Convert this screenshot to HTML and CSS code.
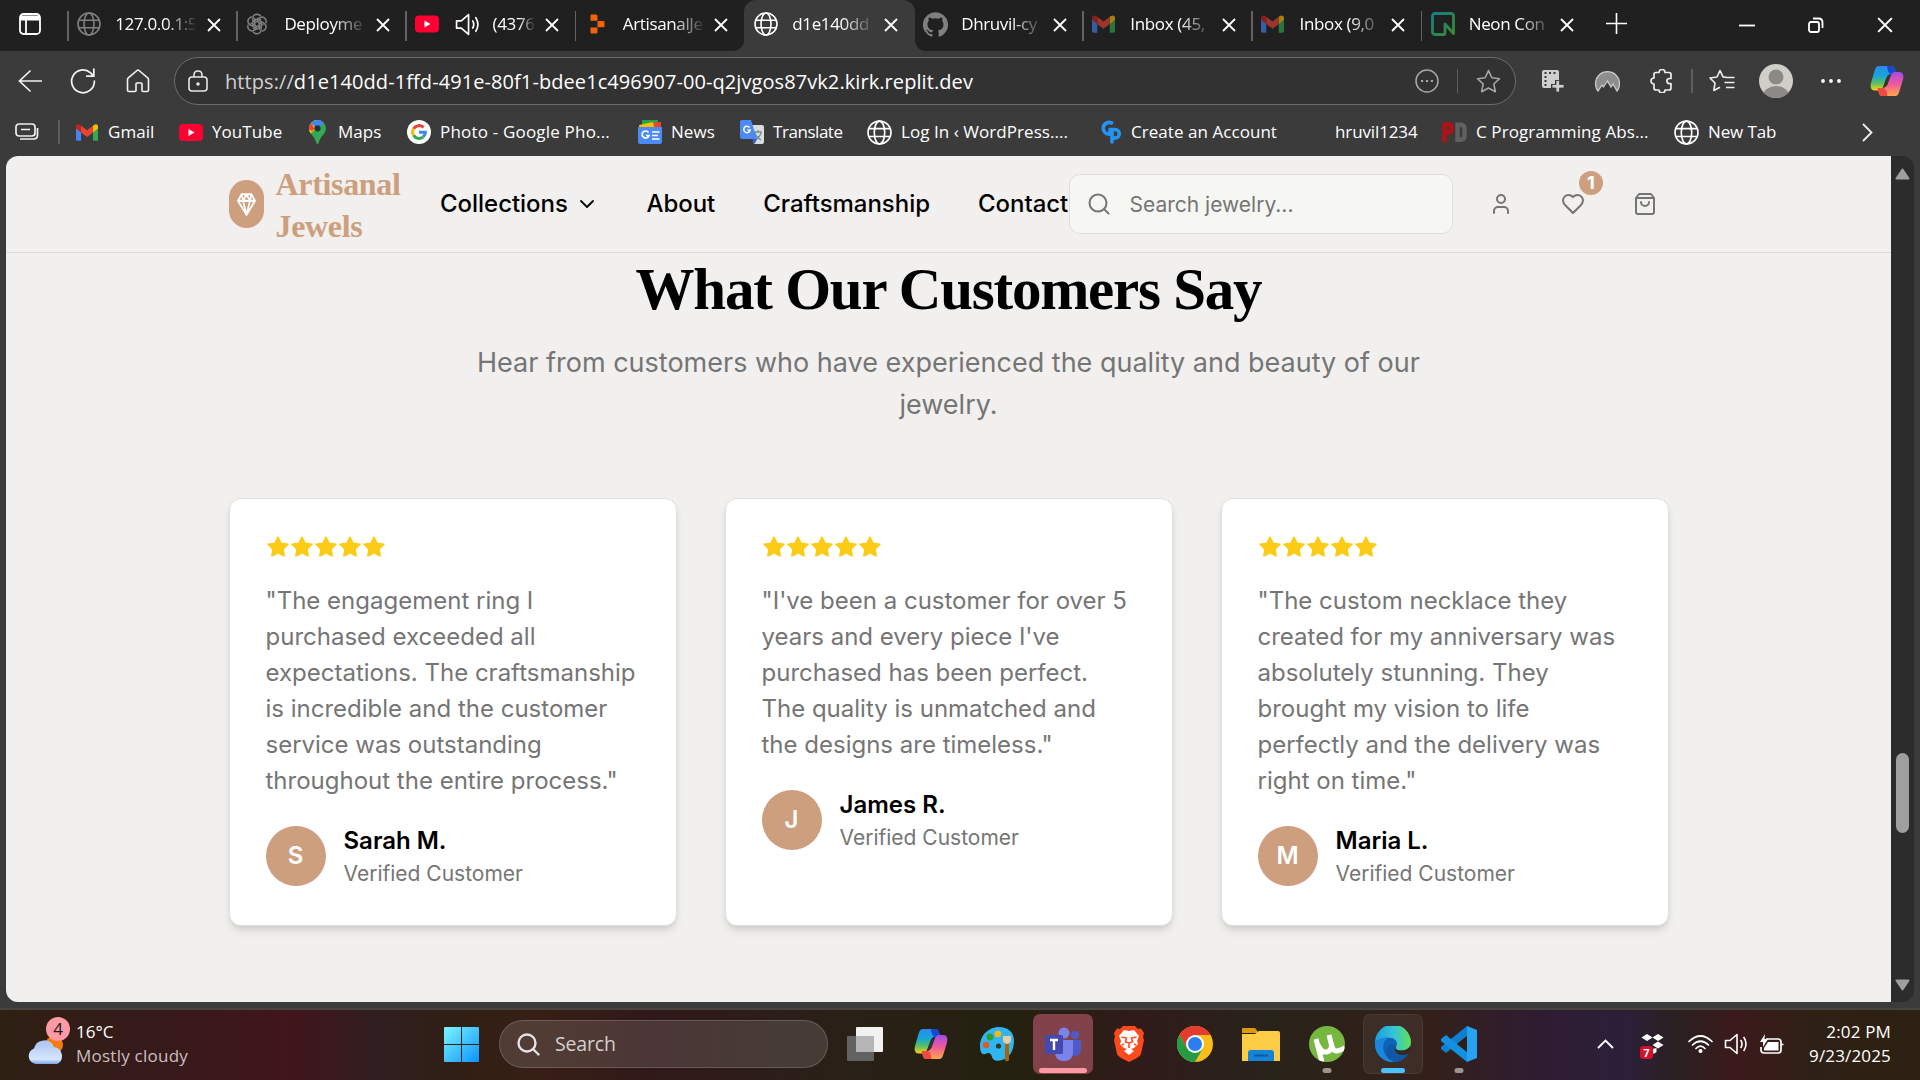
FILE: index.html
```html
<!DOCTYPE html>
<html lang="en">
<head>
<meta charset="utf-8">
<title>Artisanal Jewels</title>
<link rel="stylesheet" href="styles.css">
</head>
<body>
<svg class="sprite" aria-hidden="true">
  <symbol id="globe" viewBox="0 0 24 24"><g fill="none" stroke="currentColor" stroke-width="1.6"><circle cx="12" cy="12" r="11"/><ellipse cx="12" cy="12" rx="5" ry="11"/><path d="M2 8.2h20M2 15.8h20"/></g></symbol>
  <symbol id="close" viewBox="0 0 14 14"><path d="M1 1l12 12M13 1L1 13" stroke="currentColor" stroke-width="1.8" fill="none"/></symbol>
  <symbol id="gmail" viewBox="0 0 24 18"><path d="M0 2v14.500Q0 18 1.600 18H5.500V8z" fill="#4285f4"/><path d="M18.500 8v10h3.900Q24 18 24 16.500V2z" fill="#34a853"/><path d="M18.500 1.500V9L24 4.500V2.500C24 .2 21.500-.7 19.800.6z" fill="#fbbc04"/><path d="M5.500 9V1.500L12 6.500l6.500-5V9L12 14z" fill="#ea4335"/><path d="M0 2.500v2L5.500 9V1.500L4.200.6C2.500-.7 0 .2 0 2.500z" fill="#c5221f"/></symbol>
  <symbol id="youtube" viewBox="0 0 24 17"><rect width="24" height="17" rx="4" fill="#f03"/><path d="M9.500 5v7l6-3.500z" fill="#fff"/></symbol>
  <symbol id="copilot" viewBox="0 0 34 32"><path d="M9 1h12c3 0 4 2 4.500 5L27 9h-6c-3 0-4 2-5 5l-3 8c-1 3-3 3.500-5 3.500H5C1 25.500 0 22 1 18L4.500 6C5.500 2.500 6.500 1 9 1z" fill="url(#cpA)"/><path d="M17 1h4c3 0 4 2 4.500 5L27 9h-5.500C19 9 17.500 6 17 1z" fill="#1947d2"/><path d="M25 31H13c-3 0-4-2-4.500-5L7.500 23H12c3 0 5-2 6-5l3-8c1-2.500 3-3 5-3h3c4 0 5 3.500 4 7.500L29.500 26c-1 3.500-2 5-4.500 5z" fill="url(#cpB)"/><path d="M7.500 23H13c2.500 0 4 3 4.500 8H13c-3 0-4-2-4.500-5z" fill="#f3483f"/><path d="M16.300 13.500l4.700-4.500-4 11.500-3.500 1z" fill="#333"/></symbol>
  <linearGradient id="cpA" x2="0" y2="1"><stop stop-color="#2b8af0"/><stop offset=".4" stop-color="#17a6d8"/><stop offset=".7" stop-color="#5bc060"/><stop offset="1" stop-color="#ffd010"/></linearGradient>
  <linearGradient id="cpB" x2="0" y2="1"><stop stop-color="#a24be8"/><stop offset=".5" stop-color="#f0599a"/><stop offset="1" stop-color="#ffa84c"/></linearGradient>
  <symbol id="speaker" viewBox="0 0 24 24"><g fill="none" stroke="currentColor" stroke-width="1.6" stroke-linejoin="round" stroke-linecap="round"><path d="M1.500 8.500v7h4.500l7 6v-19l-7 6z"/><path d="M17 8.500q2 3.500 0 7M20 5.500q4 6.500 0 13"/></g></symbol>
  <symbol id="star-line" viewBox="0 0 24 24"><path d="M12 1.500l3.200 6.900 7.400.9-5.500 5.100 1.500 7.400L12 18.200l-6.600 3.600 1.500-7.400L1.400 9.300l7.400-.9z" fill="none" stroke="currentColor" stroke-width="1.500" stroke-linejoin="round"/></symbol>
  <symbol id="star" viewBox="0 0 24 24"><path d="M12 2l3.090 6.260L22 9.270l-5 4.870 1.180 6.880L12 17.770l-6.180 3.250L7 14.140 2 9.270l6.910-1.010z" fill="#facc15" stroke="#facc15" stroke-width="1.500" stroke-linejoin="round"/></symbol>
  <symbol id="rating" viewBox="0 0 120 24"><use href="#star" width="24" height="24"/><use href="#star" x="24" width="24" height="24"/><use href="#star" x="48" width="24" height="24"/><use href="#star" x="72" width="24" height="24"/><use href="#star" x="96" width="24" height="24"/></symbol>
</svg>

<header class="tabstrip">
  <div class="workspaces"><svg width="22" height="22" viewBox="0 0 22 22" fill="none" stroke="#fff" stroke-width="1.800"><rect x="1" y="1" width="20" height="20" rx="3.500"/><path d="M1 5h20" stroke-width="5"/><path d="M7 6v15"/></svg></div>
  <div class="tab first"><svg class="fav dim" width="24" height="24"><use href="#globe"/></svg><span class="title">127.0.0.1:5</span><svg class="x"><use href="#close"/></svg></div>
  <div class="tab"><svg class="fav dim" width="22" height="22" viewBox="0 0 24 24" fill="none" stroke="currentColor" stroke-width="1.600" stroke-linejoin="round"><g id="petal"><path d="M7.500 14.800V6.500Q7.500 1.500 12 1.300q2.500 0 4.200 2M16.500 6.500l-6.800 4"/></g><use href="#petal" transform="rotate(60 12 12)"/><use href="#petal" transform="rotate(120 12 12)"/><use href="#petal" transform="rotate(180 12 12)"/><use href="#petal" transform="rotate(240 12 12)"/><use href="#petal" transform="rotate(300 12 12)"/></svg><span class="title">Deployme</span><svg class="x"><use href="#close"/></svg></div>
  <div class="tab"><svg class="fav" width="24" height="20"><use href="#youtube"/></svg><svg class="sound" width="25" height="25"><use href="#speaker"/></svg><span class="title short">(4376</span><svg class="x"><use href="#close"/></svg></div>
  <div class="tab"><svg class="fav" width="24" height="20" viewBox="0 0 24 20" fill="#f26207"><path d="M5.500 1.500Q5.500.5 6.500.5H11q1.500 0 1.500 1.500v4.800h-7zM12.500 7h6q1 0 1 1v4.200q0 1-1 1h-6zM5.500 13.400h7v4.800q0 1.300-1.500 1.300H6.500q-1 0-1-1z"/></svg><span class="title">ArtisanalJe</span><svg class="x"><use href="#close"/></svg></div>
  <div class="tab active"><svg class="fav" width="24" height="24"><use href="#globe"/></svg><span class="title">d1e140dd</span><svg class="x"><use href="#close"/></svg></div>
  <div class="tab plain"><svg class="fav dim" width="25" height="25" viewBox="0 0 24 24" fill="currentColor"><path d="M12 .3a12 12 0 0 0-3.800 23.400c.6.1.8-.3.800-.6v-2c-3.300.7-4-1.600-4-1.600-.6-1.400-1.400-1.800-1.400-1.800-1-.7.1-.7.1-.7 1.200 0 1.900 1.200 1.900 1.200 1 1.800 2.800 1.300 3.500 1 0-.8.4-1.300.7-1.600-2.700-.3-5.500-1.300-5.500-6 0-1.200.5-2.300 1.300-3.100-.2-.4-.6-1.600 0-3.200 0 0 1-.3 3.400 1.200a11.500 11.500 0 0 1 6 0c2.300-1.500 3.300-1.200 3.300-1.200.6 1.600.2 2.800 0 3.200.9.800 1.300 1.900 1.300 3.200 0 4.600-2.800 5.600-5.500 5.900.5.400.9 1 .9 2.200v3.300c0 .3.100.7.800.6A12 12 0 0 0 12 .3"/></svg><span class="title">Dhruvil-cy</span><svg class="x"><use href="#close"/></svg></div>
  <div class="tab"><svg class="fav faded" width="23" height="18"><use href="#gmail"/></svg><span class="title">Inbox (45,</span><svg class="x"><use href="#close"/></svg></div>
  <div class="tab"><svg class="fav faded" width="23" height="18"><use href="#gmail"/></svg><span class="title">Inbox (9,0</span><svg class="x"><use href="#close"/></svg></div>
  <div class="tab"><svg class="fav" width="24" height="24" viewBox="0 0 24 24" fill="none" stroke="url(#neon)" stroke-width="2.800" stroke-linejoin="round"><defs><linearGradient id="neon" x2="1" y2="1"><stop stop-color="#157f86"/><stop offset="1" stop-color="#3b8a32"/></linearGradient></defs><path d="M13 22.500H4q-2.500 0-2.500-2.500V4Q1.500 1.500 4 1.500h16q2.500 0 2.500 2.500v17.500L14 12v8.500q0 2-1 2z"/></svg><span class="title">Neon Con</span><svg class="x"><use href="#close"/></svg></div>
  <div class="newtab"><svg width="21" height="21" viewBox="0 0 21 21"><path d="M10.500 0v21M0 10.500h21" stroke="#fff" stroke-width="1.600"/></svg></div>
  <div class="winctl">
    <svg width="16" height="16" viewBox="0 0 16 16"><path d="M0 8.500h16" stroke="#fff" stroke-width="1.800"/></svg>
    <svg width="16" height="16" viewBox="0 0 16 16" fill="none" stroke="#fff" stroke-width="1.800"><rect x="1" y="5" width="10" height="10" rx="2"/><path d="M5 1.500h5.500q4 0 4 4V11"/></svg>
    <svg width="16" height="16"><use href="#close"/></svg>
  </div>
</header>

<nav class="toolbar">
  <svg width="24" height="24" viewBox="0 0 24 24" fill="none" stroke="#f2f2f2" stroke-width="1.700" stroke-linecap="round"><path d="M12 2L1.500 12 12 22M1.500 12H24"/></svg>
  <svg width="26" height="26" viewBox="0 0 24 24" fill="none" stroke="#f2f2f2" stroke-width="1.600" stroke-linecap="round"><path d="M22.500 12A10.500 10.500 0 1 1 19 4.500l3 3M22 1v6.500h-6.500"/></svg>
  <svg width="24" height="24" viewBox="0 0 24 24" fill="none" stroke="#f2f2f2" stroke-width="1.600" stroke-linejoin="round"><path d="M1.500 10.500Q1.500 9.500 2.300 8.800L11 1.500q1-.8 2 0l8.700 7.300q.8.700.8 1.700V21q0 1.500-1.500 1.500h-4q-1 0-1-1V15q0-1-1-1h-4q-1 0-1 1v6.500q0 1-1 1H3Q1.500 22.500 1.500 21z"/></svg>
  <div class="address">
    <svg width="20" height="22" viewBox="0 0 20 22" fill="none" stroke="#e6e6e6" stroke-width="1.600"><rect x="1" y="7" width="18" height="14" rx="3"/><path d="M6 7V5q0-4 4-4t4 4v2"/><circle cx="10" cy="14" r="1" fill="#e6e6e6"/></svg>
    <span class="url"><span class="scheme">https://</span>d1e140dd-1ffd-491e-80f1-bdee1c496907-00-q2jvgos87vk2.kirk.replit.dev</span>
    <svg width="24" height="24" viewBox="0 0 24 24" fill="none" stroke="#a6a6a6" stroke-width="1.500"><circle cx="12" cy="12" r="11"/><path d="M6 12h2.200M10.900 12h2.200M15.800 12H18" stroke-width="2.200"/></svg>
    <i class="rule"></i>
    <svg class="muted" width="25" height="25"><use href="#star-line"/></svg>
  </div>
  <div class="tools">
    <svg width="22" height="22" viewBox="0 0 22 22"><path d="M2 0h13q2 0 2 2v8h-4v4H9v4H2q-2 0-2-2V2Q0 0 2 0z" fill="#cfcfcf"/><path d="M2.500 2h2v2h-2zM7 2h2v2H7zM11.500 2h2v2h-2zM2.500 6h2v2h-2zM2.500 10h2v2h-2zM2.500 14h2v2h-2z" fill="#3b3b3b"/><path d="M14 10.500h3.500v4H22V18h-4.500v4H14v-4h-4v-3.500h4z" fill="#cfcfcf" stroke="#3b3b3b" stroke-width=".8"/></svg>
    <svg width="25" height="22" viewBox="0 0 25 22"><path d="M3 21A12 12 0 1 1 22 21l-4-7-2 3-3.500-6-4 6-1.500-2z" fill="#8d8d8d" stroke="#c9c9c9" stroke-width="1.300"/></svg>
    <svg width="24" height="24" viewBox="0 0 24 24" fill="none" stroke="#eee" stroke-width="1.700" stroke-linejoin="round"><path d="M6 3.500h3a3 3 0 0 1 6 0h4q2 0 2 2v4h-1.500a2.600 2.600 0 0 0 0 5.200H21V19q0 2-2 2h-4a3 3 0 0 1-6 0H6q-2 0-2-2v-4a3 3 0 0 1 0-6V5.500q0-2 2-2z"/></svg>
    <i class="rule"></i>
    <svg width="26" height="24" viewBox="0 0 26 24" fill="none" stroke="#eee" stroke-width="1.600" stroke-linejoin="round"><path d="M18 8.500l-4-.6L11 1.500 8 8 1 9l5 5-1.200 7.500L11 18.200M17 8.500h8.500M15.500 13.500h10M17 18.500h8.500"/></svg>
    <svg width="34" height="34" viewBox="0 0 34 34"><clipPath id="face"><circle cx="17" cy="17" r="17"/></clipPath><g clip-path="url(#face)"><path d="M0 0h34v34H0z" fill="#d0cec9"/><circle cx="17" cy="13" r="7.500" fill="#8c8986"/><ellipse cx="17" cy="32" rx="13" ry="10" fill="#8c8986"/></g></svg>
    <svg width="22" height="6" viewBox="0 0 22 6" fill="#fff"><circle cx="3" cy="3" r="1.900"/><circle cx="11" cy="3" r="1.900"/><circle cx="19" cy="3" r="1.900"/></svg>
    <svg width="34" height="32"><use href="#copilot"/></svg>
  </div>
</nav>

<nav class="bookmarks">
  <svg width="24" height="18" viewBox="0 0 24 18" fill="none" stroke="#f0f0f0" stroke-width="1.700"><rect x="1" y="1" width="19" height="12" rx="3"/><path d="M6 6.500h9M22.500 5v7q0 4-4 4H5"/></svg>
  <i class="rule"></i>
  <a><svg width="22" height="17"><use href="#gmail"/></svg><span>Gmail</span></a>
  <a><svg width="24" height="17"><use href="#youtube"/></svg><span>YouTube</span></a>
  <a><svg width="17" height="24" viewBox="0 0 17 24"><path d="M8.500 0A8.500 8.500 0 0 1 17 8.500c0 5-5.500 7.500-7 13.500q-.3 2-1.500 2T7 22C5.500 16 0 13.500 0 8.500A8.500 8.500 0 0 1 8.500 0z" fill="#34a853"/><path d="M1.500 13.500L14.500 2.500 8.500 0A8.500 8.500 0 0 0 0 8.500q0 3 1.500 5z" fill="#fbbc04"/><path d="M5.500 8.500L1.900 3.200A8.500 8.500 0 0 0 .1 9.500l3 1.500z" fill="#ea4335"/><path d="M1.900 3.200A8.500 8.500 0 0 1 14.500 2.500L9 9.500z" fill="#4285f4"/><circle cx="8.500" cy="8.300" r="3.100" fill="#26323c"/></svg><span>Maps</span></a>
  <a><svg width="24" height="24" viewBox="0 0 24 24" fill="none" stroke-width="3"><circle cx="12" cy="12" r="12" fill="#fff"/><path d="M16.500 7.500A6.400 6.400 0 0 0 6.500 8.700" stroke="#ea4335"/><path d="M6.500 8.700a6.400 6.400 0 0 0 0 6.600" stroke="#fbbc05"/><path d="M6.500 15.300a6.400 6.400 0 0 0 9.700 1.600" stroke="#34a853"/><path d="M16.200 16.900q2.300-2 2.200-4.700H12" stroke="#4285f4"/></svg><span class="wide">Photo - Google Pho...</span></a>
  <a><svg width="24" height="24" viewBox="0 0 24 24"><path d="M4 0h16v9H4z" fill="#25a34a"/><path d="M12 3l11-1v8H12z" fill="#ea4335"/><path d="M1 5l14-3 2 8H2z" fill="#fbbc04"/><path d="M0 7h24v15q0 2-2 2H2q-2 0-2-2z" fill="#4c8bf5"/><path d="M10.500 12.500a3.500 3.500 0 1 0 .5 3H8M14 12h7.500M14 15.500h6M14 19h7.500" stroke="#fff" stroke-width="1.700" fill="none"/></svg><span>News</span></a>
  <a><svg width="24" height="24" viewBox="0 0 24 24"><path d="M9 5h13q2 0 2 2v15q0 2-2 2h-8z" fill="#dcdcdc"/><path d="M14 12h8M18 10v2M15 13q1 4 6 7M21 13q-1 4-6 7" stroke="#7b8c99" stroke-width="1.300" fill="none"/><path d="M2 0h9l6 19H2q-2 0-2-2V2Q0 0 2 0z" fill="#4c8bf5"/><path d="M12 19h5l-2.500 5z" fill="#2a5ecb"/><path d="M9.500 7.500a3.200 3.200 0 1 0 .6 2.500H7.500" stroke="#fff" stroke-width="1.500" fill="none"/></svg><span class="tight">Translate</span></a>
  <a><svg width="25" height="25"><use href="#globe"/></svg><span>Log In ‹ WordPress....</span></a>
  <a><svg width="22" height="24" viewBox="0 0 22 24" fill="none" stroke="#2494f2" stroke-width="3.600" stroke-linecap="round"><path d="M11.500 3A5.800 5.800 0 1 0 10 14V9.500"/><path d="M12 22V9.500h3a4.300 4.300 0 0 1 0 8.600h-2.500"/></svg><span>Create an Account</span></a>
  <a><span class="snug">hruvil1234</span></a>
  <a><svg width="25" height="21" viewBox="0 0 25 21" fill="none" stroke-width="4.400"><path d="M2.500 20.500V2.500h4q3.300 0 3.300 4t-3.300 4H3" stroke="#b01217"/><path d="M15.500 2.800h3q4 0 4 4v7q0 4-4 4h-3z" stroke="#606060"/></svg><span class="roomy">C Programming Abs...</span></a>
  <a><svg width="25" height="25"><use href="#globe"/></svg><span class="snug">New Tab</span></a>
  <svg width="11" height="19" viewBox="0 0 11 19" fill="none" stroke="#f0f0f0" stroke-width="1.800"><path d="M1 1l8.500 8.500L1 18"/></svg>
</nav>

<div class="viewport">
  <div class="page">
    <header class="site-header">
      <div class="inner">
        <div class="brand">
          <span class="mark"><svg width="19" height="23" viewBox="0 0 19 19" preserveAspectRatio="none" fill="none" stroke="#fff" stroke-width="1.700" stroke-linejoin="round"><path d="M4.500 1h10L18 6.500 9.500 18 1 6.500zM1 6.500h17M9.500 1L6 6.500 9.500 18 13 6.500zM4.500 1L6 6.500M14.500 1L13 6.500"/></svg></span>
          <span class="brand-name">Artisanal Jewels</span>
        </div>
        <div class="menu">
          <a>Collections<svg width="18" height="18" viewBox="0 0 24 24" fill="none" stroke="#000" stroke-width="2.400" stroke-linecap="round" stroke-linejoin="round"><path d="M4 8l8 8 8-8"/></svg></a>
          <a>About</a><a>Craftsmanship</a><a>Contact</a>
        </div>
        <div class="search"><svg width="24" height="24" viewBox="0 0 24 24" fill="none" stroke="#757575" stroke-width="2" stroke-linecap="round"><circle cx="11" cy="11" r="8.500"/><path d="M21.500 21.500l-4.400-4.400"/></svg><span>Search jewelry...</span></div>
        <div class="actions">
          <svg width="24" height="24" viewBox="0 0 24 24"><path d="M19 21v-2a4 4 0 0 0-4-4H9a4 4 0 0 0-4 4v2"/><circle cx="12" cy="7" r="4"/></svg>
          <div class="wish"><svg width="24" height="24" viewBox="0 0 24 24"><path d="M19 14c1.490-1.460 3-3.210 3-5.500A5.500 5.500 0 0 0 16.500 3c-1.760 0-3 .5-4.500 2-1.500-1.500-2.740-2-4.500-2A5.500 5.500 0 0 0 2 8.500c0 2.300 1.500 4.050 3 5.500l7 7Z"/></svg><b class="count">1</b></div>
          <svg width="24" height="24" viewBox="0 0 24 24"><path d="M6 2L3 6v14a2 2 0 0 0 2 2h14a2 2 0 0 0 2-2V6l-3-4ZM3 6h18M16 10a4 4 0 0 1-8 0"/></svg>
        </div>
      </div>
    </header>
    <main class="reviews">
      <h2>What Our Customers Say</h2>
      <p class="lead">Hear from customers who have experienced the quality and beauty of our jewelry.</p>
      <div class="cards">
        <article class="card">
          <svg class="stars" width="120" height="24"><use href="#rating"/></svg>
          <p>"The engagement ring I purchased exceeded all expectations. The craftsmanship is incredible and the customer service was outstanding throughout the entire process."</p>
          <div class="author"><span class="avatar">S</span><div><strong>Sarah M.</strong><small>Verified Customer</small></div></div>
        </article>
        <article class="card">
          <svg class="stars" width="120" height="24"><use href="#rating"/></svg>
          <p>"I've been a customer for over 5 years and every piece I've purchased has been perfect. The quality is unmatched and the designs are timeless."</p>
          <div class="author"><span class="avatar">J</span><div><strong>James R.</strong><small>Verified Customer</small></div></div>
        </article>
        <article class="card">
          <svg class="stars" width="120" height="24"><use href="#rating"/></svg>
          <p>"The custom necklace they created for my anniversary was absolutely stunning. They brought my vision to life perfectly and the delivery was right on time."</p>
          <div class="author"><span class="avatar">M</span><div><strong>Maria L.</strong><small>Verified Customer</small></div></div>
        </article>
      </div>
    </main>
  </div>
  <div class="scrollbar">
    <svg width="15" height="12" viewBox="0 0 15 12"><path d="M7.500 1.500L13.500 10.500H1.500z" fill="#9f9f9f" stroke="#9f9f9f" stroke-width="2" stroke-linejoin="round"/></svg>
    <i class="thumb"></i>
    <svg width="15" height="12" viewBox="0 0 15 12"><path d="M7.500 10.500L13.500 1.500H1.500z" fill="#9f9f9f" stroke="#9f9f9f" stroke-width="2" stroke-linejoin="round"/></svg>
  </div>
</div>

<footer class="taskbar">
  <div class="weather">
    <svg width="44" height="44" viewBox="0 0 44 44"><defs><linearGradient id="cl" x2="0" y2="1"><stop stop-color="#a9c4f5"/><stop offset=".8" stop-color="#d7e6fb"/><stop offset="1" stop-color="#7fa3e8"/></linearGradient></defs><circle cx="26" cy="23" r="9" fill="#f57b0c"/><path d="M8 42a8 8 0 0 1-2-15.500A10.500 10.500 0 0 1 26 25a9 9 0 0 1 3 17z" fill="url(#cl)"/></svg>
    <b class="alert">4</b>
    <div><span>16°C</span><span class="sub">Mostly cloudy</span></div>
  </div>
  <div class="apps">
    <svg class="start" width="35" height="35" viewBox="0 0 35 35"><defs><linearGradient id="win" x2="1" y2="1"><stop stop-color="#7df5ff"/><stop offset="1" stop-color="#0a93ff"/></linearGradient></defs><path d="M1 0h16v17H0V1Q0 0 1 0zM18 0h16q1 0 1 1v16H18zM0 18h17v17H1q-1 0-1-1zM18 18h17v16q0 1-1 1H18z" fill="url(#win)"/></svg>
    <div class="find"><svg width="23" height="23" viewBox="0 0 23 23" fill="none" stroke="#e6e3e6" stroke-width="2.400" stroke-linecap="round"><circle cx="10" cy="10" r="8.500"/><path d="M16 16l5.500 5.500"/></svg><span>Search</span></div>
    <div class="app"><svg width="36" height="34" viewBox="0 0 36 34"><rect y="9" width="27" height="25" rx="1" fill="#626262"/><rect x="9" width="27" height="25" rx="1" fill="#f1f1f1"/><path d="M9 9h18v16H9z" fill="#b5b5b5"/></svg></div>
    <div class="app"><svg width="34" height="32"><use href="#copilot"/></svg></div>
    <div class="app"><svg width="36" height="36" viewBox="0 0 36 36"><path d="M20 1C9 1 1 10 1 20c0 6 2 9 5 8 4-2 6-1 7 3 1 3 3 4.500 8 3.500C31 32.500 35 24 35 15 35 6 29 1 20 1z" fill="#2fb6ee"/><circle cx="11" cy="11" r="3.400" fill="#2e9e2c"/><circle cx="19" cy="8" r="3.300" fill="#fdb913"/><circle cx="7" cy="19" r="3.200" fill="#e2562a"/><circle cx="19.500" cy="20" r="2.600" fill="#2d3a26"/><rect x="26" y="14" width="4" height="21" rx="1.500" fill="#a8640d"/><path d="M24 10h8v4q0 3-4 4-4-1-4-4z" fill="#e7cda5"/></svg></div>
    <div class="app alerting"><svg width="36" height="34" viewBox="0 0 36 34"><circle cx="19" cy="6" r="5.500" fill="#7b83eb"/><circle cx="30" cy="8" r="4" fill="#5059c9"/><path d="M24 13h12v9q0 7-7 7h-5z" fill="#5059c9"/><path d="M10 13h18v12q0 9-9 9t-9-9z" fill="#7b83eb"/><rect y="8" width="18" height="19" rx="1.500" fill="#4349b0"/><path d="M5 13h8M9 13v10" stroke="#fff" stroke-width="2.400"/></svg></div>
    <div class="app"><svg width="30" height="36" viewBox="0 0 30 36"><path d="M9 0h12l3 3 3-.5L30 7l-1 4 1 3-3 14q-1 2-4 4l-8 4-8-4q-3-2-4-4L0 14l1-3-1-4 3-4.500L6 3z" fill="#fb4b1c"/><path d="M15 5l5-1 5 6-2 5 1 3-4 4-3 1 3 2-5 4-5-4 3-2-3-1-4-4 1-3-2-5 5-6z" fill="#fff"/><path d="M7.500 11l5 1-1 4 3.500 1 3.500-1-1-4 5-1M15 17v5M10 18l-2 1M20 18l2 1" stroke="#fb4b1c" stroke-width="1.600" fill="none"/></svg></div>
    <div class="app"><svg width="36" height="36" viewBox="0 0 36 36"><circle cx="18" cy="18" r="18" fill="#f9bd1b"/><path d="M18 9h15.600A18 18 0 0 0 2.400 9l7.800 13.500z" fill="#e33b2e"/><path d="M2.400 9A18 18 0 0 0 18 36l7.800-13.500H10.200z" fill="#269a44"/><circle cx="18" cy="18" r="9" fill="#fff"/><circle cx="18" cy="18" r="7" fill="#2c7ef0"/></svg></div>
    <div class="app"><svg width="38" height="34" viewBox="0 0 38 34"><path d="M0 2Q0 1 1 1h12l4 5H0z" fill="#dd9a08"/><path d="M0 7h13l4-3h19q2 0 2 2v28H0z" fill="#fdcc47"/><path d="M6 34V26q0-3 3-3h20q3 0 3 3v8z" fill="#1583d8"/><path d="M12 28.500h14" stroke="#0c5a9f" stroke-width="2"/></svg></div>
    <div class="app idle"><svg width="36" height="36" viewBox="0 0 36 36"><clipPath id="mu"><circle cx="18" cy="18" r="18"/></clipPath><g clip-path="url(#mu)"><path d="M0 0h36v36H0z" fill="#76b83f"/><path d="M7 13l6 23M9 19q3 8 9 7 6-2 4-9l-2-8M22 17q2 9 6 8 4-1 8-3" stroke="#fff" stroke-width="5" fill="none"/></g></svg></div>
    <div class="app current"><svg width="36" height="36" viewBox="0 0 36 36"><defs><linearGradient id="eg"><stop stop-color="#1b9de2"/><stop offset=".55" stop-color="#36c6d4"/><stop offset="1" stop-color="#62e04f"/></linearGradient></defs><circle cx="18" cy="18" r="18" fill="#0f62b8"/><path d="M0 17A18 18 0 0 1 36 16c0 6-5 8.500-10 8.500-4 0-6-1.500-5-3.500 2-3 1-8-5-9C9 11 2 13 0 17z" fill="url(#eg)"/><path d="M0 17c2-4 8-6 13-5-4 2-6 8-4 14 2 5 6 9 11 10A18 18 0 0 1 0 17z" fill="#1b86dc"/><path d="M21 21c-1 2 1 3.500 5 3.500 4 0 7.500-1.500 9.500-4.500l.5 5-3 3q-5 3-10 1-5-3-4-7z" fill="#35291f"/><path d="M20 21q-1 8 8 8 3 0 5-1-5 8-13 8-10-3-9-12 2-6 7-6 3 1 2 3z" fill="#1257a6"/></svg></div>
    <div class="app idle"><svg width="36" height="36" viewBox="0 0 36 36"><path d="M26 0l10 4v28l-10 4z" fill="#23a3f2"/><path d="M26 0v10L5 27l-5-4v-2z" fill="#0f7fd0"/><path d="M26 36V26L5 9l-5 4v2z" fill="#1490e0"/><path d="M26 10l-10 8 10 8z" fill="#2f1e19"/></svg></div>
  </div>
  <div class="tray">
    <svg width="17" height="10" viewBox="0 0 17 10" fill="none" stroke="#fff" stroke-width="1.900"><path d="M1 9l7.500-7.500L16 9"/></svg>
    <div class="dropbox"><svg width="23" height="20" viewBox="0 0 23 20" fill="#fff"><path d="M6 0l5.500 3.500L6 7 .5 3.500zM17 0l5.500 3.500L17 7l-5.500-3.500zM17 7.500l5.500 3.500-5.500 3.500-5.500-3.500zM11.500 15l4-1v4l-3 2z"/></svg><b>7</b></div>
    <svg width="25" height="18" viewBox="0 0 25 18" fill="none" stroke="#fff" stroke-width="1.700" stroke-linecap="round"><path d="M1 6.500q11.500-11 23 0M4.500 10q8-7.500 16 0M8 13.500q4.500-4.500 9 0"/><circle cx="12.500" cy="16" r="1.200" fill="#fff"/></svg>
    <svg class="white" width="24" height="24"><use href="#speaker"/></svg>
    <svg width="25" height="21" viewBox="0 0 25 21" fill="none" stroke="#fff" stroke-width="1.700"><path d="M7 5h12q3 0 3 3v8q0 3-3 3H5q-3 0-3-3v-3M22.500 10.500h2"/><path d="M9 8h10.500v8.500H5V14z" fill="#fff" stroke="none"/><path d="M6 0L1 8h3v5l5-8H5.500z" fill="#fff" stroke="none"/></svg>
    <div class="clock"><span>2:02 PM</span><span>9/23/2025</span></div>
  </div>
</footer>
</body>
</html>
```
FILE: styles.css
```css
* { box-sizing: border-box; }
body {
  margin: 0;
  width: 1920px;
  height: 1080px;
  overflow: hidden;
  display: flex;
  flex-direction: column;
  background: #3b3b3b;
  color: #fff;
  font: 17px/24px "Open Sans", "Noto Sans", sans-serif;
}
svg { display: block; flex: none; }
.sprite { position: absolute; width: 0; height: 0; }
.rule { width: 1.500px; height: 24px; background: #5e5e5e; }

/* Tab strip */
.tabstrip { display: flex; height: 51px; background: #202020; }
.workspaces { width: 67px; padding: 13px 0 0 19px; }
.tab {
  position: relative;
  display: flex;
  align-items: center;
  width: 169.200px;
  height: 48px;
  padding-left: 10px;
}
.tab::before { content: ""; position: absolute; left: 0; top: 11px; width: 1.500px; height: 30px; background: #636363; }
.tab.active::before, .tab.plain::before { display: none; }
.fav { margin-right: auto; }
.fav.dim { color: #808080; }
.fav.faded { opacity: .62; }
.title {
  width: 80px;
  white-space: nowrap;
  letter-spacing: -.35px;
  -webkit-mask-image: linear-gradient(90deg, #000 62%, transparent 104%);
  mask-image: linear-gradient(90deg, #000 62%, transparent 104%);
}
.title.short { width: 41px; }
.sound { margin-right: 13px; }
.x { width: 14px; height: 14px; margin: 2px 15.500px 0 11.500px; }
.tab.active { height: 51px; padding-bottom: 3px; background: #3b3b3b; border-radius: 12px 12px 0 0; width: 171px; margin-right: -1.800px; }
.tab.active .x { margin-right: 17px; }
.tab.active::after {
  content: "";
  position: absolute;
  bottom: 0;
  left: -10px;
  width: 191px;
  height: 10px;
  background:
    radial-gradient(circle at 0 0, transparent 9.500px, #3b3b3b 10px) 0 0 / 10px 10px no-repeat,
    radial-gradient(circle at 100% 0, transparent 9.500px, #3b3b3b 10px) 100% 0 / 10px 10px no-repeat;
}
.newtab { padding: 13px 0 0 16px; }
.winctl { display: flex; gap: 53px; margin: 17px 27px 0 auto; }

/* Toolbar */
.toolbar { display: flex; align-items: center; height: 60px; padding-left: 18px; }
.toolbar > svg:nth-child(1) { margin-right: 28px; }
.toolbar > svg:nth-child(2) { margin-right: 30px; }
.address {
  display: flex;
  align-items: center;
  width: 1342px;
  height: 48px;
  margin-left: 24px;
  padding: 0 14px 0 13px;
  background: #323232;
  border: 1.500px solid #6c6c6c;
  border-radius: 24px;
}
.address .url { flex: 1; margin-left: 17px; padding-top: 1px; font-size: 20px; letter-spacing: .08px; }
.scheme { color: #d0d0d0; }
.address .rule { margin: 0 18px; }
.muted { color: #a6a6a6; }
.tools {
  flex: 1;
  display: grid;
  grid-template-columns: 53px 55px 41px 18px 50px 61px 50px 34px;
  align-items: center;
  padding-left: 26px;
}

/* Bookmarks */
.bookmarks {
  display: grid;
  grid-template-columns: 43px 18px 103px 130px 98px 231px 102px 127px 233px 235px 107px 232px 188px 11px;
  align-items: center;
  height: 45px;
  padding: 0 0 3px 15px;
}
.bookmarks a { display: flex; align-items: center; gap: 9px; white-space: nowrap; letter-spacing: .05px; }
.bookmarks .tight { letter-spacing: -.45px; }
.bookmarks .wide { letter-spacing: .19px; }
.bookmarks .roomy { letter-spacing: .1px; }
.bookmarks .snug { letter-spacing: -.12px; }
.bookmarks a:nth-of-type(1) { gap: 10px; }
.bookmarks a:nth-of-type(3) { gap: 12px; }

/* Web page */
.viewport { display: flex; height: 846px; margin: 0 6px; border-radius: 12px; overflow: hidden; }
.page {
  width: 1885px;
  background: #f1f0ee;
  color: #000;
  font-family: Inter, sans-serif;
  font-size: 24px;
  line-height: 36px;
}
.site-header { height: 97px; border-bottom: 1px solid #dcdcda; }
.inner { display: flex; align-items: center; width: 1440px; height: 96px; margin: 0 auto; }
.brand { display: flex; align-items: center; gap: 12px; width: 211.500px; }
.mark { display: grid; place-items: center; width: 35px; height: 48px; border-radius: 18px; background: #cd9f7e; }
.brand-name { width: 135px; padding-top: 1px; font: 700 32px/42px "Liberation Serif", serif; letter-spacing: -.33px; color: #cd9f7e; }
.menu { display: flex; gap: 48px; font-weight: 500; letter-spacing: -.03px; white-space: nowrap; width: 629px; }
.menu a { display: flex; align-items: center; gap: 10px; }
.menu a:first-child { margin-right: 2.500px; }
.search {
  display: flex;
  align-items: center;
  gap: 18.500px;
  width: 384px;
  height: 60px;
  padding-left: 17px;
  background: #f6f7f2;
  border: 1px solid #dfdfda;
  border-radius: 11px;
  color: #757575;
  font-size: 21px;
}
.search span { padding-top: 1px; }
.actions { display: flex; gap: 48px; margin-left: 36px; }
.actions svg { fill: none; stroke: #757575; stroke-width: 2; stroke-linecap: round; stroke-linejoin: round; }
.wish { position: relative; }
.count {
  position: absolute;
  left: 18px;
  top: -21px;
  width: 24px;
  height: 24px;
  border-radius: 12px;
  background: #cd9f7e;
  color: #fff;
  font-size: 18px;
  line-height: 24px;
  text-align: center;
}
.reviews { width: 1440px; margin: 0 auto; padding-top: 6px; text-align: center; }
h2 { margin: 0 0 23px; font: 700 59px/60px "Liberation Serif", serif; letter-spacing: -1.230px; }
.lead { width: 1008px; margin: 0 auto 72px; font-size: 27px; line-height: 42px; color: #757575; }
.cards { display: grid; grid-template-columns: repeat(3, 448px); gap: 48px; text-align: left; }
.card {
  padding: 36px;
  background: #fff;
  border: 1px solid #dfdfdc;
  border-radius: 12px;
  box-shadow: 0 6px 9px -1.500px rgb(0 0 0 / .1), 0 3px 6px -3px rgb(0 0 0 / .1);
}
.card p { margin: 24px 0; color: #757575; }
.author { display: flex; align-items: center; gap: 18px; }
.avatar { width: 60px; height: 60px; border-radius: 50%; background: #cd9f7e; color: #fff; font-weight: 600; line-height: 60px; text-align: center; }
.author strong { display: block; font-weight: 600; }
.author small { display: block; font-size: 21px; line-height: 30px; color: #757575; }
.scrollbar { display: flex; flex-direction: column; align-items: center; width: 23px; padding: 12px 0 11px; background: #2c2c2c; }
.thumb { width: 13px; height: 80px; margin: 573px 0 auto; border-radius: 7px; background: #9f9f9f; }

/* Taskbar */
.taskbar {
  position: relative;
  display: flex;
  align-items: center;
  height: 72px;
  margin-top: 6px;
  padding-bottom: 2px;
  border-top: 2px solid #4a4340;
  background: linear-gradient(90deg, #2e2013 0, #341b19 120px, #41151c 290px, #301e20 380px, #301f14 460px, #371f16 540px, #31191a 650px, #2a2018 830px, #24210f 1010px, #301b1a 1140px, #28231a 1270px, #33201a 1430px, #2f1c33 1540px, #2b2038 1625px, #2b2020 1680px, #3c1a1c 1740px, #2f2015 1810px, #2c2112 1920px);
}
.weather { position: relative; display: flex; width: 432px; padding-left: 28px; }
.weather > svg { margin-top: 2px; }
.weather div { display: flex; flex-direction: column; margin-left: 4px; }
.weather .sub { color: #cbbfc0; letter-spacing: .24px; }
.alert { position: absolute; left: 46px; top: -3px; width: 24px; height: 24px; border-radius: 12px; background: #ff9aa5; color: #1a1a1a; font-weight: 400; line-height: 23px; text-align: center; }
.apps { display: flex; align-items: center; }
.start { margin: 0 20px 0 12px; }
.find {
  display: flex;
  align-items: center;
  gap: 15px;
  width: 329px;
  height: 48px;
  margin-right: 4px;
  padding-left: 17px;
  background: rgb(255 255 255 / .13);
  border: 1.500px solid rgb(255 255 255 / .17);
  border-radius: 24px;
  font-size: 19.500px;
  letter-spacing: -.15px;
  color: #d6cfce;
}
.app { position: relative; display: grid; place-items: center; width: 60px; height: 60px; margin: 0 3px; border-radius: 7px; }
.app::after { position: absolute; bottom: 1px; left: 50%; height: 5px; border-radius: 3px; transform: translateX(-50%); }
.alerting { background: #814249; }
.alerting::after { content: ""; width: 48px; background: #ff9aa5; }
.idle::after { content: ""; width: 9px; background: #9b9590; }
.current { background: rgb(255 255 255 / .06); border: 1px solid rgb(255 255 255 / .06); }
.current::after { content: ""; width: 24px; background: #4cc2ff; bottom: 0; }
.tray { display: flex; align-items: center; margin: 0 29px 0 auto; }
.tray > svg:first-child { margin-right: 27px; }
.dropbox { position: relative; margin-right: 24px; }
.dropbox b { position: absolute; left: -1px; bottom: -5px; width: 13px; height: 13px; border-radius: 3px; background: #d50f27; font-size: 11px; line-height: 13px; text-align: center; }
.tray .white { margin: 0 11px; }
.clock { display: flex; flex-direction: column; width: 107px; text-align: right; letter-spacing: .16px; }
```
